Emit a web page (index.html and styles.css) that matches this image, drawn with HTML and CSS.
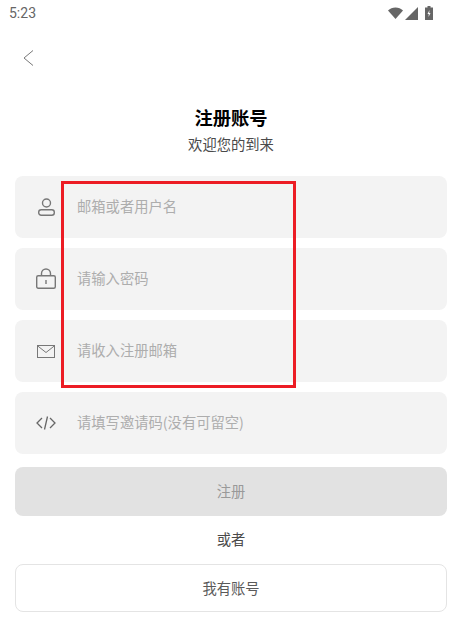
FILE: index.html
```html
<!DOCTYPE html>
<html lang="zh">
<head>
   <meta charset="utf-8"/>
   <title>注册账号</title>
   <link rel="stylesheet" href="styles.css">
</head>
<body>
   <div class="status">
      <span class="time">5:23</span>
      <div class="status-icons">
         <svg width="15" height="12" viewBox="0 0 15 12"><path d="M0 3.500C2 1.500 4.600 .5 7.500 .5s5.500 1 7.500 3L7.500 12z" fill="#666"/></svg>
         <svg width="13" height="13" viewBox="0 0 13 13"><path d="M13 0v13H0z" fill="#666"/></svg>
         <svg class="battery" width="8" height="14" viewBox="0 0 8 14"><path d="M2.500 0h3v1.500H8V14H0V1.500h2.500z" fill="#666"/><path d="M4.500 4 2.500 8h1.300l-.3 3 2-4H4.200z" fill="#fff"/></svg>
      </div>
   </div>
   <div class="nav">
      <svg width="11" height="16" viewBox="0 0 11 16"><path d="M10 .5 1 8l9 7.500" fill="none" stroke="#777" stroke-width="1"/></svg>
   </div>
   <h1 class="title">注册账号</h1>
   <p class="subtitle">欢迎您的到来</p>
   <div class="form">
      <div class="field">
         <span class="field-icon">
            <svg width="17" height="18" viewBox="0 0 17 18"><circle cx="8.500" cy="5" r="4" fill="none" stroke="#777" stroke-width="1.400"/><rect x=".7" y="11.700" width="15.600" height="5.600" rx="2.500" fill="none" stroke="#777" stroke-width="1.400"/></svg>
         </span>
         <span class="hint">邮箱或者用户名</span>
      </div>
      <div class="field">
         <span class="field-icon">
            <svg class="lock" width="20" height="21" viewBox="0 0 20 21"><path d="M5.500 8V5.500a4.500 4.500 0 0 1 9 0V8" fill="none" stroke="#777" stroke-width="1.400"/><rect x=".7" y="7.700" width="18.600" height="12.600" rx="1.500" fill="none" stroke="#777" stroke-width="1.400"/><path d="M10 12v4" stroke="#777" stroke-width="1.400"/></svg>
         </span>
         <span class="hint">请输入密码</span>
      </div>
      <div class="field">
         <span class="field-icon">
            <svg width="18" height="13" viewBox="0 0 18 13"><rect x=".5" y=".5" width="17" height="12" fill="none" stroke="#777"/><path d="M.5 .8 9 7.500 17.500 .8" fill="none" stroke="#777"/></svg>
         </span>
         <span class="hint">请收入注册邮箱</span>
      </div>
      <div class="field">
         <span class="field-icon">
            <svg width="20" height="14" viewBox="0 0 20 14"><path d="M6 2 1 7l5 5M14 2l5 5-5 5M11.500 .5l-3 13" fill="none" stroke="#666" stroke-width="1.300"/></svg>
         </span>
         <span class="hint">请填写邀请码(没有可留空)</span>
      </div>
   </div>
   <div class="btn-submit">注册</div>
   <div class="or">或者</div>
   <div class="btn-login">我有账号</div>
   <div class="mark"></div>
</body>
</html>
```

FILE: styles.css
```css
body {
   margin:0;
   height:631px;
   overflow:hidden;
   position:relative;
   background-color:#FFF;
   font-family:"Noto Sans CJK SC","Noto Sans",sans-serif;
   font-size:14.3px;
   color:#4A4A4A;
}
.status {
   height:26px;
   padding:0 29px 0 9px;
   display:flex;
   justify-content:space-between;
   align-items:center;
}
.time {
   font-family:Roboto,sans-serif;
   font-size:14px;
   color:#666;
}
.status-icons {
   display:flex;
   align-items:center;
   gap:2px;
}
.battery {
   margin-left:5px;
}
.nav {
   height:16px;
   padding:24px 0 0 23px;
   line-height:0;
}
.title {
   margin:38px 0 0;
   height:27px;
   line-height:27px;
   font-size:18.3px;
   font-weight:bold;
   color:#000;
   text-align:center;
}
.subtitle {
   margin:3px 0 0;
   height:20px;
   line-height:20px;
   text-align:center;
}
.form {
   margin:22px 15px 0;
   display:flex;
   flex-direction:column;
   gap:10px;
}
.field {
   height:62px;
   display:flex;
   align-items:center;
   background-color:#F3F3F3;
   border-radius:8px;
}
.field-icon {
   width:62px;
   display:flex;
   justify-content:center;
}
.lock {
   margin-bottom:2px;
}
.hint {
   margin-bottom:4px;
   color:#ADADAD;
}
.btn-submit {
   margin:13px 15px 0;
   height:49px;
   line-height:47px;
   text-align:center;
   background-color:#E2E2E2;
   border-radius:8px;
   color:#999;
}
.or {
   margin-top:13px;
   height:20px;
   line-height:20px;
   text-align:center;
}
.btn-login {
   margin:15px 15px 0;
   height:46px;
   line-height:46px;
   text-align:center;
   border:1px solid #E4E4E4;
   border-radius:8px;
   color:#5A5A5A;
}
.mark {
   position:absolute;
   left:61px;
   top:181px;
   width:229px;
   height:201px;
   border:3px solid #EC1C24;
}
```
